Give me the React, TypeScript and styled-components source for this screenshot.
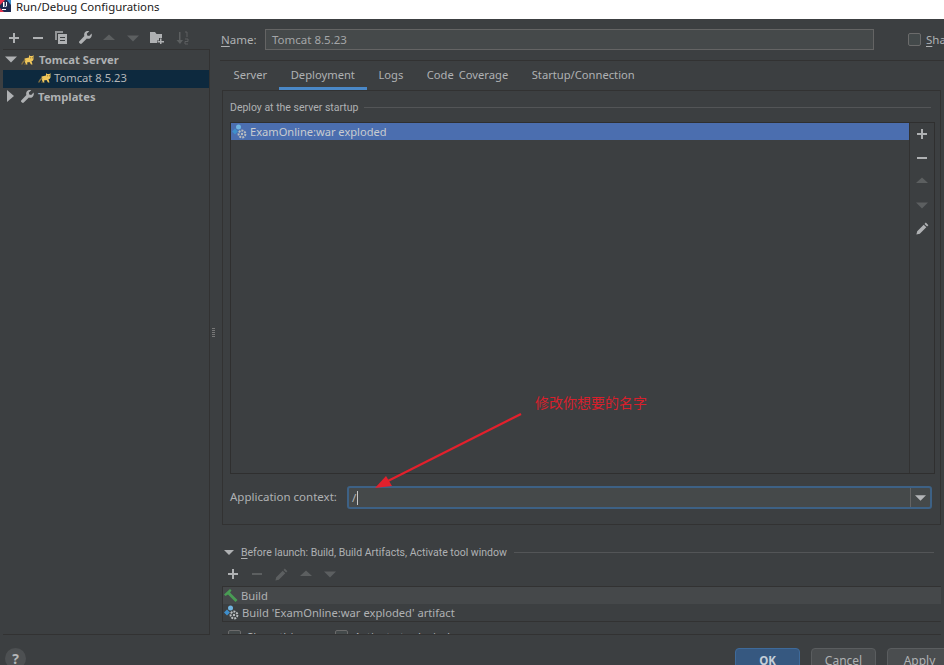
import styled, { createGlobalStyle } from 'styled-components';

const GlobalStyle = createGlobalStyle`
  html, body {
    margin: 0;
    padding: 0;
    background: #3c3f41;
  }
  * {
    box-sizing: border-box;
  }
`;

const ink = '#afb1b3';
const dim = '#5c5f60';

type GlyphProps = { color?: string; size?: number };

const Plus = ({ color = ink, size = 12 }: GlyphProps) => (
  <svg width={size} height={size} viewBox="0 0 12 12">
    <path d="M5 1h2v4h4v2H7v4H5V7H1V5h4z" fill={color} />
  </svg>
);
const Minus = ({ color = ink, size = 12 }: GlyphProps) => (
  <svg width={size} height={size} viewBox="0 0 12 12">
    <path d="M1 5h10v2H1z" fill={color} />
  </svg>
);
const Up = ({ color = dim, size = 12 }: GlyphProps) => (
  <svg width={size} height={size} viewBox="0 0 12 12">
    <path d="M6 2.500L12 8H0z" fill={color} />
  </svg>
);
const Down = ({ color = dim, size = 12 }: GlyphProps) => (
  <svg width={size} height={size} viewBox="0 0 12 12">
    <path d="M0 3.500h12L6 9.500z" fill={color} />
  </svg>
);
const Copy = () => (
  <svg width="12" height="13" viewBox="0 0 12 13">
    <path d="M0 0h8v2H2v7H0z" fill={ink} opacity="0.75" />
    <path d="M3 3h9v10H3zM5 6v1h5V6zM5 9v1h5V9z" fill={ink} fillRule="evenodd" />
  </svg>
);
const Wrench = ({ color = ink, size = 13 }: GlyphProps) => (
  <svg width={size} height={size} viewBox="0 0 13 13">
    <path d="M12.600 2.600L10.200 5 8.200 4.600 7.800 2.600 10.300.3C8.500-.4 6.500.2 5.600 1.800 5 2.900 5 4.100 5.400 5L.4 10.200c-.6.6-.5 1.400 0 1.900l.6.5c.5.5 1.300.5 1.800 0L7.900 7.600c1.200.4 2.600.2 3.600-.7 1.200-1.100 1.600-2.800 1.100-4.300z" fill={color} />
  </svg>
);
const FolderPlus = () => (
  <svg width="14" height="13" viewBox="0 0 14 13">
    <path d="M0 1h5l1.500 2H12v4H9v2.500H7V12H0z" fill={ink} />
    <path d="M10 7.500h1.500V10H14v1.500h-2.500V14H10v-2.500H7.500V10H10z" fill={ink} />
  </svg>
);
const SortDigits = () => (
  <svg width="13" height="14" viewBox="0 0 13 14">
    <path d="M3 1h1.500v8H7l-3 4-3.500-4H3z" fill={dim} />
    <path d="M9 1h2v5M9 8h3v2.500H9V13h3" fill="none" stroke={dim} />
  </svg>
);
const Pencil = ({ color = ink, size = 13 }: GlyphProps) => (
  <svg width={size} height={size} viewBox="0 0 13 13">
    <path d="M9.800.6l2.600 2.600-1.300 1.300-2.600-2.600zM7.700 2.700l2.600 2.600-6.500 6.500L.4 12.600l.8-3.400z" fill={color} />
  </svg>
);
const Tomcat = () => (
  <svg width="14" height="11" viewBox="0 0 14 11">
    <path d="M3.500 4.500L8 3.500V1l1 1h2.500l1-1v4.500l-1 1.500H10.500l1 3.500h-1.500L8.500 8 6 8.500 6.500 10.500H5L4 8.500z" fill="#efc65a" />
    <path d="M0 10.500C1 8 2.500 6 4 5.500L4.500 7C3 7.500 2 9 1.500 10.500z" fill="#8a7440" />
    <path d="M3 10.500L4.500 8.500 5 10.500z" fill="#8a7440" />
    <path d="M9.300 3.500h.8v.8h-.8zM11 3.500h.8v.8H11z" fill="#4a3d1e" />
  </svg>
);
const Artifact = () => (
  <svg width="15" height="15" viewBox="0 0 15 15">
    <circle cx="6.500" cy="3" r="2.500" fill="#6fb4e0" />
    <path d="M3 4.500l3 3-3 3-3-3z" fill="#3f8fcb" />
    <circle cx="10" cy="10" r="3.400" fill="none" stroke="#b9bcbe" strokeWidth="2" strokeDasharray="2 1" />
    <circle cx="10" cy="10" r="1.200" fill="#b9bcbe" />
  </svg>
);
const Hammer = () => (
  <svg width="14" height="14" viewBox="0 0 14 14">
    <path d="M0 5.500L6 0l1.500 1.500L6 3.500l7.500 7.500-2 2L4 5.500 1.500 7z" fill="#499c54" />
  </svg>
);
const WindowIcon = () => (
  <svg width="11" height="12" viewBox="0 0 11 12">
    <rect width="11" height="12" fill="#1d2b52" />
    <path d="M0 0h5L0 5zM0 12V8l4 4z" fill="#e8344e" />
    <path d="M11 0v5L7 0z" fill="#3f8fcb" />
    <path d="M2 9h4v1H2z" fill="#fff" />
    <path d="M3 2h1.500v5H3zM6 2h1v3.500c0 1-.8 1.500-2 1.300V6c.6.100 1 0 1-.6z" fill="#fff" />
  </svg>
);

const Window = styled.div`
  position: relative;
  width: 944px;
  height: 665px;
  overflow: hidden;
  background: #3c3f41;
  color: ${ink};
  font-family: 'Noto Sans', 'Noto Sans CJK SC', sans-serif;
  font-size: 11.500px;
`;

const TitleBar = styled.div`
  height: 19px;
  background: #fff;
  display: flex;
  align-items: center;
  padding-bottom: 7px;
  gap: 5px;
  color: #1b1b1b;
  font-size: 11.400px;
  overflow: hidden;
`;

const Content = styled.div`
  height: 616px;
  display: flex;
`;

const Sidebar = styled.div`
  width: 210px;
  display: flex;
  flex-direction: column;
  flex: none;
`;

const ToolRow = styled.div<{ $gap: number; $pad: number }>`
  display: flex;
  align-items: center;
  gap: ${(p) => p.$gap}px;
  padding-left: ${(p) => p.$pad}px;
`;

const SideTools = styled(ToolRow)`
  height: 30px;
  padding-top: 7px;
  flex: none;
`;

const Tree = styled.div`
  flex: 1;
  margin-left: 3px;
  border: 1px solid #323232;
  border-left: 0;
  padding-top: 1px;
`;

const TreeRow = styled.div<{ $selected?: boolean; $indent: number }>`
  height: 18.500px;
  display: flex;
  align-items: center;
  gap: ${(p) => (p.$selected ? 2 : 4)}px;
  padding-left: ${(p) => p.$indent}px;
  padding-bottom: 2px;
  background: ${(p) => (p.$selected ? '#0d293e' : 'transparent')};
  color: ${(p) => (p.$selected ? '#b4b6b8' : ink)};
`;

const TreeLabel = styled.span<{ $bold?: boolean }>`
  font-weight: ${(p) => (p.$bold ? 700 : 400)};
  font-size: 11.200px;
`;

const Expander = styled.span`
  width: 12px;
  display: flex;
`;

const Splitter = styled.div`
  width: 10px;
  flex: none;
  display: flex;
  align-items: center;
  padding-left: 2px;
  padding-top: 12px;
`;

const Grip = styled.div`
  width: 3px;
  height: 10px;
  background: repeating-linear-gradient(#777 0 1px, transparent 1px 2px);
`;

const Main = styled.div`
  flex: 1;
  min-width: 0;
  display: flex;
  flex-direction: column;
`;

const NameRow = styled.div`
  height: 42px;
  flex: none;
  display: flex;
  align-items: flex-start;
  padding-top: 10px;
  border-bottom: 1px solid #323232;
`;

const NameLabel = styled.span`
  width: 45px;
  padding-left: 1px;
  line-height: 21px;
  flex: none;
  u {
    text-underline-offset: 2px;
  }
`;

const NameInput = styled.div`
  width: 609px;
  height: 21px;
  flex: none;
  background: #45494a;
  border: 1px solid #646464;
  padding-left: 6px;
  line-height: 19px;
  color: #a4a6a8;
`;

const Share = styled.div`
  display: flex;
  align-items: center;
  gap: 5px;
  margin-left: 34px;
  height: 21px;
  white-space: nowrap;
  u {
    text-underline-offset: 2px;
  }
`;

const Check = styled.span`
  width: 13px;
  height: 13px;
  flex: none;
  display: inline-block;
  border: 1px solid #6b6b6b;
  border-radius: 2px;
  background: #43494a;
`;

const Tabs = styled.div`
  height: 29px;
  flex: none;
  display: flex;
  margin-left: 2px;
  font-size: 11.200px;
  word-spacing: 2px;
`;

const Tab = styled.div<{ $active?: boolean }>`
  height: 29px;
  padding: 0 12px 0 11.500px;
  line-height: 28px;
  border-bottom: 3px solid ${(p) => (p.$active ? '#4a88c7' : 'transparent')};
`;

const DeployPanel = styled.div`
  height: 435px;
  flex: none;
  margin: 0 3px 0 2px;
  border: 1px solid #323232;
  padding: 8px 5px 0 7px;
  display: flex;
  flex-direction: column;
`;

const GroupTitle = styled.div`
  display: flex;
  align-items: center;
  gap: 6px;
  height: 16px;
  margin-right: 4px;
  font-family: Roboto, sans-serif;
  font-size: 10.500px;
  &::after {
    content: '';
    flex: 1;
    height: 1px;
    background: #535557;
  }
`;

const ListBox = styled.div`
  height: 352px;
  flex: none;
  margin-top: 7px;
  display: flex;
  border: 1px solid #2f2f2f;
`;

const ListBody = styled.div`
  flex: 1;
`;

const ArtifactRow = styled.div`
  height: 17px;
  display: flex;
  align-items: center;
  gap: 3px;
  padding-left: 1px;
  background: #4b6eaf;
  color: #c8ccd0;
  font-size: 11.100px;
`;

const SideButtons = styled.div`
  width: 25px;
  flex: none;
  border-left: 1px solid #323232;
  display: flex;
  flex-direction: column;
  align-items: center;
  padding-top: 5px;
  gap: 11.500px;
`;

const ContextRow = styled.div`
  display: flex;
  align-items: center;
  height: 23px;
  margin-top: 12px;
  gap: 10px;
`;

const ContextLabel = styled.span`
  margin-top: -2px;
`;

const ContextCombo = styled.div`
  width: 585px;
  height: 23px;
  flex: none;
  display: flex;
  align-items: center;
  justify-content: space-between;
  background: #45494a;
  border: 2px solid #3d6185;
  border-radius: 3px;
  padding-left: 3px;
  color: #b4b6b8;
`;

const Caret = styled.span`
  display: inline-block;
  width: 1px;
  height: 14px;
  background: #c8c8c8;
  margin-left: 1px;
  vertical-align: -3px;
`;

const ComboArrow = styled.div`
  width: 20px;
  height: 100%;
  border-left: 1px solid #646464;
  display: flex;
  align-items: center;
  justify-content: center;
`;

const BeforeLaunch = styled.div`
  flex: 1;
  min-height: 0;
  margin: 0 3px 0 2px;
  padding-top: 19px;
  overflow: hidden;
  border-bottom: 1px solid #323232;
`;

const LaunchTitle = styled.div`
  display: flex;
  align-items: center;
  height: 16px;
  padding-left: 2px;
  gap: 7px;
  margin-right: 7px;
  white-space: nowrap;
  font-family: Roboto, sans-serif;
  font-size: 10.500px;
  &::after {
    content: '';
    flex: 1;
    height: 1px;
    background: #535557;
  }
  u {
    text-underline-offset: 2px;
  }
`;

const LaunchTools = styled(ToolRow)`
  height: 26px;
  padding-top: 2px;
`;

const TaskList = styled.div`
  border: 1px solid #323232;
  border-right: 0;
`;

const TaskRow = styled.div<{ $shaded?: boolean }>`
  height: 17px;
  display: flex;
  align-items: center;
  gap: 3px;
  padding-left: 1px;
  font-size: 11.200px;
  background: ${(p) => (p.$shaded ? '#45484a' : 'transparent')};
`;

const LaunchOptions = styled.div`
  display: flex;
  gap: 7px;
  padding: 7px 0 0 6px;
  height: 30px;
`;

const OptionLabel = styled.label`
  display: flex;
  align-items: center;
  height: 14px;
  gap: 6px;
  width: 100px;
  white-space: nowrap;
`;

const Footer = styled.div`
  height: 30px;
  display: flex;
  align-items: flex-start;
  padding-top: 13px;
`;

const Help = styled.div`
  width: 21px;
  height: 21px;
  margin-left: 5px;
  border-radius: 50%;
  background: #4d5052;
  display: flex;
  align-items: center;
  justify-content: center;
  font-weight: 700;
  font-size: 14px;
  color: #b4b6b8;
`;

const Actions = styled.div`
  margin-left: auto;
  display: flex;
  gap: 11px;
  margin-right: -8px;
`;

const ActionButton = styled.div<{ $primary?: boolean }>`
  width: 65px;
  height: 28px;
  border-radius: 4px;
  text-align: center;
  line-height: 24px;
  font-size: ${(p) => (p.$primary ? '11.500px' : '12px')};
  background: ${(p) => (p.$primary ? '#365880' : '#4a4d4f')};
  border: 1px solid ${(p) => (p.$primary ? '#3e6a9a' : '#5a5d5f')};
  color: ${(p) => (p.$primary ? '#c5ced8' : ink)};
  font-weight: ${(p) => (p.$primary ? 700 : 400)};
`;

const Annotation = styled.div`
  position: absolute;
  left: 535px;
  top: 393px;
  color: #d8202c;
  font-size: 14px;
  line-height: 18px;
  font-family: 'Noto Sans CJK SC', sans-serif;
`;

const ArrowLayer = styled.svg`
  position: absolute;
  left: 0;
  top: 0;
  pointer-events: none;
`;

export default function App() {
  return (
    <Window>
      <GlobalStyle />
      <TitleBar>
        <WindowIcon />
        Run/Debug Configurations
      </TitleBar>
      <Content>
        <Sidebar>
          <SideTools $gap={11.5} $pad={8}>
            <Plus />
            <Minus />
            <Copy />
            <Wrench />
            <Up />
            <Down />
            <FolderPlus />
            <SortDigits />
          </SideTools>
          <Tree>
            <TreeRow $indent={2}>
              <Expander>
                <Down color={ink} />
              </Expander>
              <Tomcat />
              <TreeLabel $bold>Tomcat Server</TreeLabel>
            </TreeRow>
            <TreeRow $indent={35} $selected>
              <Tomcat />
              <TreeLabel>Tomcat 8.5.23</TreeLabel>
            </TreeRow>
            <TreeRow $indent={2}>
              <Expander>
                <svg width="12" height="12" viewBox="0 0 12 12">
                  <path d="M2 0l7 6-7 6z" fill={ink} />
                </svg>
              </Expander>
              <Wrench />
              <TreeLabel $bold>Templates</TreeLabel>
            </TreeRow>
          </Tree>
        </Sidebar>
        <Splitter>
          <Grip />
        </Splitter>
        <Main>
          <NameRow>
            <NameLabel>
              <u>N</u>ame:
            </NameLabel>
            <NameInput>Tomcat 8.5.23</NameInput>
            <Share>
              <Check />
              <span>
                <u>S</u>hare
              </span>
            </Share>
          </NameRow>
          <Tabs>
            <Tab>Server</Tab>
            <Tab $active>Deployment</Tab>
            <Tab>Logs</Tab>
            <Tab>Code Coverage</Tab>
            <Tab>Startup/Connection</Tab>
          </Tabs>
          <DeployPanel>
            <GroupTitle>Deploy at the server startup</GroupTitle>
            <ListBox>
              <ListBody>
                <ArtifactRow>
                  <Artifact />
                  ExamOnline:war exploded
                </ArtifactRow>
              </ListBody>
              <SideButtons>
                <Plus />
                <Minus />
                <Up />
                <Down />
                <Pencil />
              </SideButtons>
            </ListBox>
            <ContextRow>
              <ContextLabel>Application context:</ContextLabel>
              <ContextCombo>
                <span>
                  /<Caret />
                </span>
                <ComboArrow>
                  <Down color="#b4b6b8" size={11} />
                </ComboArrow>
              </ContextCombo>
            </ContextRow>
          </DeployPanel>
          <BeforeLaunch>
            <LaunchTitle>
              <Down color={ink} size={10} />
              <span>
                <u>B</u>efore launch: Build, Build Artifacts, Activate tool window
              </span>
            </LaunchTitle>
            <LaunchTools $gap={12} $pad={5}>
              <Plus />
              <Minus color={dim} />
              <Pencil color={dim} />
              <Up />
              <Down />
            </LaunchTools>
            <TaskList>
              <TaskRow $shaded>
                <Hammer />
                Build
              </TaskRow>
              <TaskRow>
                <Artifact />
                Build 'ExamOnline:war exploded' artifact
              </TaskRow>
            </TaskList>
            <LaunchOptions>
              <OptionLabel>
                <Check />
                Show this page
              </OptionLabel>
              <OptionLabel>
                <Check />
                Activate tool window
              </OptionLabel>
            </LaunchOptions>
          </BeforeLaunch>
        </Main>
      </Content>
      <Footer>
        <Help>?</Help>
        <Actions>
          <ActionButton $primary>OK</ActionButton>
          <ActionButton>Cancel</ActionButton>
          <ActionButton>Apply</ActionButton>
        </Actions>
      </Footer>
      <Annotation>修改你想要的名字</Annotation>
      <ArrowLayer width="944" height="665" viewBox="0 0 944 665">
        <path d="M521 414L384 483" stroke="#e3202c" strokeWidth="2.200" fill="none" />
        <path d="M375 488L386 476L392 486z" fill="#e3202c" />
      </ArrowLayer>
    </Window>
  );
}
